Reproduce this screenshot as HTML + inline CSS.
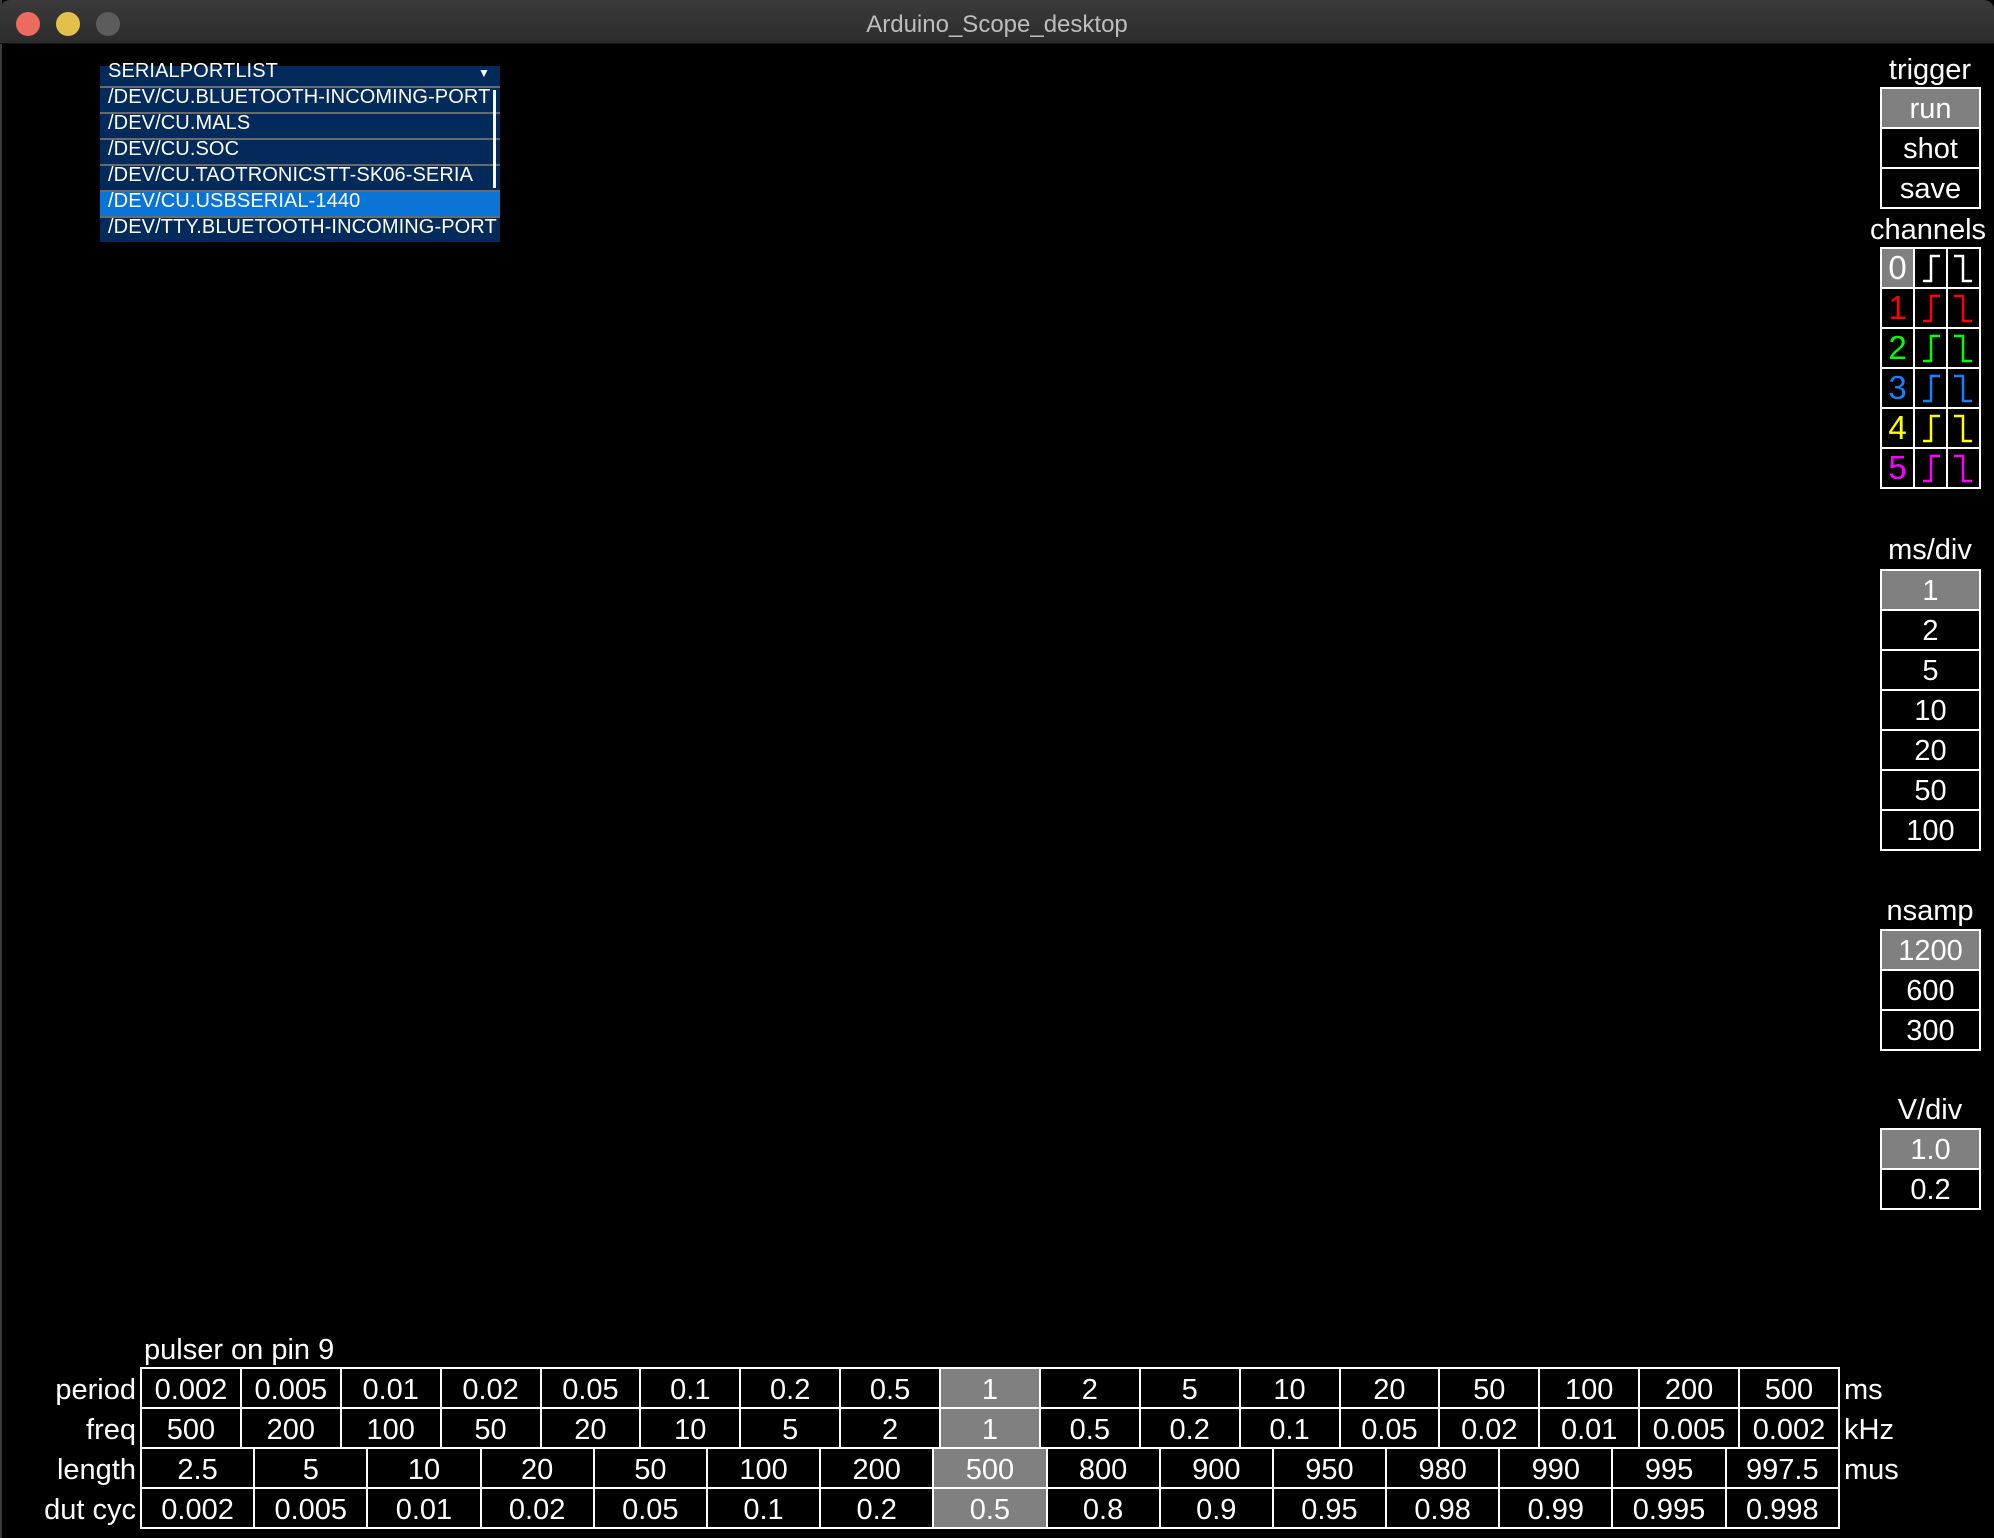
<!DOCTYPE html>
<html><head><meta charset="utf-8"><style>
*{margin:0;padding:0;box-sizing:border-box}
html,body{width:1994px;height:1538px;background:#000;overflow:hidden;font-family:"Liberation Sans",Arial,sans-serif;color:#fff}
#tb{position:absolute;left:0;top:0;width:1994px;height:44px;background:linear-gradient(#3a3a3a,#2c2c2c);border-bottom:1px solid #111;border-radius:10px 10px 0 0}
.dot{position:absolute;top:12px;width:24px;height:24px;border-radius:50%}
#title{position:absolute;left:0;width:1994px;top:11px;text-align:center;font-size:24px;color:#bdbdbd}
#dd{position:absolute;left:100px;top:66px;width:400px;height:176px;background:#022a5a}
#dd div{position:absolute;left:0;width:400px;height:26px;font-size:20px;line-height:19px;padding-left:8px;white-space:nowrap;letter-spacing:0.1px}
#dd .sep{border-top:2px solid #6a6a6a}
.lbl{position:absolute;font-size:29px;text-align:center;width:120px;left:1870px}
.bt{position:absolute;left:1880px;width:101px;border:2px solid #fff;border-bottom:none}
.bt div{height:40px;border-bottom:2px solid #fff;text-align:center;font-size:29px;line-height:40px}
.g{background:#808080}
table{position:absolute;border-collapse:collapse;table-layout:fixed}
td{border:2px solid #fff;height:40px;text-align:center;font-size:29px;line-height:34px;padding:4px 0 0 0;white-space:nowrap;overflow:hidden}
.rl{position:absolute;font-size:29px;text-align:right;width:130px;left:6px}
.u{position:absolute;font-size:29px;left:1844px}
#ch{position:absolute;left:1880px;top:247px;width:100px}
#ch td{width:33px;height:40px;font-size:33px;line-height:36px;padding:0}
#ch svg{display:block;margin:0 auto}
</style></head><body>
<div style="position:absolute;left:0;top:0;width:2px;height:1538px;background:#3a3a3a"></div>
<div id="tb">
<div class="dot" style="left:16px;background:#ed6a5e"></div>
<div class="dot" style="left:56px;background:#e3c04b"></div>
<div class="dot" style="left:96px;background:#5c5c5c"></div>
<div id="title">Arduino_Scope_desktop</div>
</div>

<div id="dd">
<div style="top:-4px">SERIALPORTLIST<span style="position:absolute;right:10px;top:2px;font-size:12px">▼</span></div>
<div class="sep" style="top:20px">/DEV/CU.BLUETOOTH-INCOMING-PORT</div>
<div class="sep" style="top:46px">/DEV/CU.MALS</div>
<div class="sep" style="top:72px">/DEV/CU.SOC</div>
<div class="sep" style="top:98px">/DEV/CU.TAOTRONICSTT-SK06-SERIA</div>
<div class="sep" style="top:124px;background:#0a74d6">/DEV/CU.USBSERIAL-1440</div>
<div class="sep" style="top:150px">/DEV/TTY.BLUETOOTH-INCOMING-PORT</div>
<span style="position:absolute;left:393px;top:24px;width:3px;height:98px;background:#fff"></span>
</div>

<div class="lbl" style="top:54px">trigger</div>
<div class="bt" style="top:87px"><div class="g">run</div><div>shot</div><div>save</div></div>
<div class="lbl" style="top:214px;left:1862px;width:132px">channels</div>

<table id="ch">
<tr><td class="g" style="color:#fff">0</td><td><svg width="30" height="36"><path d="M7 31H15V6H24" fill="none" stroke="#fff" stroke-width="2.5"/></svg></td><td><svg width="30" height="36"><path d="M5 6H14V31H23" fill="none" stroke="#fff" stroke-width="2.5"/></svg></td></tr>
<tr><td style="color:#f00">1</td><td><svg width="30" height="36"><path d="M7 31H15V6H24" fill="none" stroke="#f00" stroke-width="2.5"/></svg></td><td><svg width="30" height="36"><path d="M5 6H14V31H23" fill="none" stroke="#f00" stroke-width="2.5"/></svg></td></tr>
<tr><td style="color:#0f0">2</td><td><svg width="30" height="36"><path d="M7 31H15V6H24" fill="none" stroke="#0f0" stroke-width="2.5"/></svg></td><td><svg width="30" height="36"><path d="M5 6H14V31H23" fill="none" stroke="#0f0" stroke-width="2.5"/></svg></td></tr>
<tr><td style="color:#1a80ff">3</td><td><svg width="30" height="36"><path d="M7 31H15V6H24" fill="none" stroke="#1a80ff" stroke-width="2.5"/></svg></td><td><svg width="30" height="36"><path d="M5 6H14V31H23" fill="none" stroke="#1a80ff" stroke-width="2.5"/></svg></td></tr>
<tr><td style="color:#ff0">4</td><td><svg width="30" height="36"><path d="M7 31H15V6H24" fill="none" stroke="#ff0" stroke-width="2.5"/></svg></td><td><svg width="30" height="36"><path d="M5 6H14V31H23" fill="none" stroke="#ff0" stroke-width="2.5"/></svg></td></tr>
<tr><td style="color:#f0f">5</td><td><svg width="30" height="36"><path d="M7 31H15V6H24" fill="none" stroke="#f0f" stroke-width="2.5"/></svg></td><td><svg width="30" height="36"><path d="M5 6H14V31H23" fill="none" stroke="#f0f" stroke-width="2.5"/></svg></td></tr>
</table>

<div class="lbl" style="top:534px">ms/div</div>
<div class="bt" style="top:569px"><div class="g">1</div><div>2</div><div>5</div><div>10</div><div>20</div><div>50</div><div>100</div></div>
<div class="lbl" style="top:895px">nsamp</div>
<div class="bt" style="top:929px"><div class="g">1200</div><div>600</div><div>300</div></div>
<div class="lbl" style="top:1094px">V/div</div>
<div class="bt" style="top:1128px"><div class="g">1.0</div><div>0.2</div></div>

<div style="position:absolute;left:144px;top:1334px;font-size:29px">pulser on pin 9</div>
<div class="rl" style="top:1374px">period</div>
<div class="rl" style="top:1414px">freq</div>
<div class="rl" style="top:1454px">length</div>
<div class="rl" style="top:1494px">dut cyc</div>
<div class="u" style="top:1374px">ms</div>
<div class="u" style="top:1414px">kHz</div>
<div class="u" style="top:1454px">mus</div>

<table style="left:140px;top:1367px;width:1700px">
<tr><td>0.002</td><td>0.005</td><td>0.01</td><td>0.02</td><td>0.05</td><td>0.1</td><td>0.2</td><td>0.5</td><td class="g">1</td><td>2</td><td>5</td><td>10</td><td>20</td><td>50</td><td>100</td><td>200</td><td>500</td></tr>
<tr><td>500</td><td>200</td><td>100</td><td>50</td><td>20</td><td>10</td><td>5</td><td>2</td><td class="g">1</td><td>0.5</td><td>0.2</td><td>0.1</td><td>0.05</td><td>0.02</td><td>0.01</td><td>0.005</td><td>0.002</td></tr>
</table>
<table style="left:140px;top:1447px;width:1700px">
<tr><td>2.5</td><td>5</td><td>10</td><td>20</td><td>50</td><td>100</td><td>200</td><td class="g">500</td><td>800</td><td>900</td><td>950</td><td>980</td><td>990</td><td>995</td><td>997.5</td></tr>
<tr><td>0.002</td><td>0.005</td><td>0.01</td><td>0.02</td><td>0.05</td><td>0.1</td><td>0.2</td><td class="g">0.5</td><td>0.8</td><td>0.9</td><td>0.95</td><td>0.98</td><td>0.99</td><td>0.995</td><td>0.998</td></tr>
</table>
</body></html>
